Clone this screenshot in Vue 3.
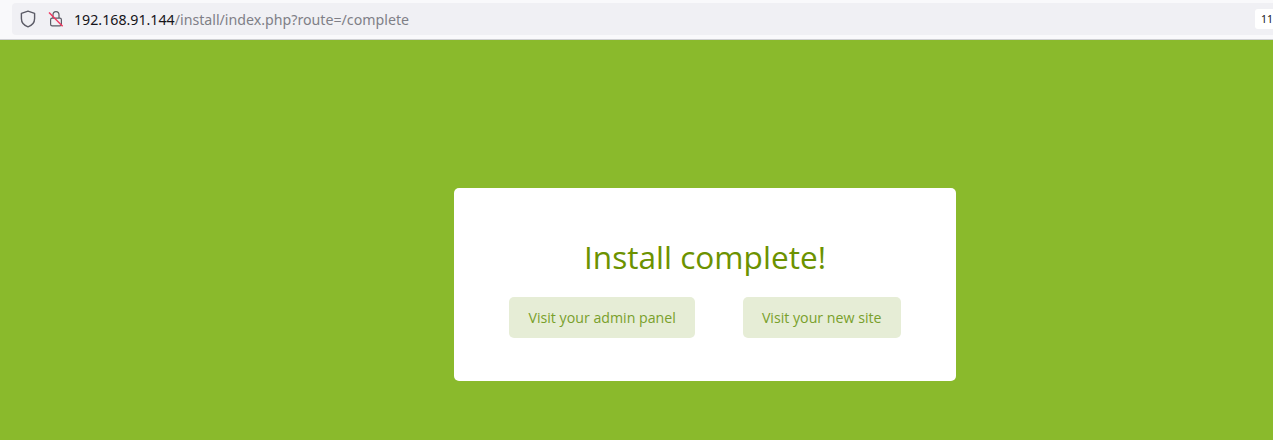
<script setup>
const buttons = ["Visit your admin panel", "Visit your new site"];
</script>

<template>
  <div class="page">
    <header class="browser-bar">
      <div class="url-field">
        <svg class="icon shield" width="16" height="18" viewBox="0 0 16 18" fill="none">
          <path
            d="M8 1.2 14.6 3.4V8.6C14.6 12.6 11.8 15.6 8 16.8 4.2 15.6 1.4 12.6 1.4 8.6V3.4Z"
            stroke="#5b5b66"
            stroke-width="1.4"
            stroke-linejoin="round"
          />
        </svg>
        <svg class="icon lock" width="16" height="18" viewBox="0 0 16 18" fill="none">
          <path
            d="M5 8V4.8C5 2.9 6.2 1.6 8 1.6S11 2.9 11 4.8V8"
            stroke="#5b5b66"
            stroke-width="1.2"
          />
          <rect x="2.6" y="8.2" width="10.8" height="7.6" rx="1.6" stroke="#5b5b66" stroke-width="1.2" />
          <path d="M1 2.4 14.6 16.2" stroke="#f0365f" stroke-width="1.4" />
        </svg>
        <span class="url"><span class="host">192.168.91.144</span>/install/index.php?route=/complete</span>
        <span class="chip">11</span>
      </div>
    </header>

    <main class="stage">
      <section class="card">
        <h1>Install complete!</h1>
        <div class="actions">
          <a v-for="label in buttons" :key="label" class="btn">{{ label }}</a>
        </div>
      </section>
    </main>
  </div>
</template>

<style>
html,
body {
  margin: 0;
  overflow: hidden;
}
</style>

<style scoped>
.page {
  width: 1273px;
  height: 440px;
  display: flex;
  flex-direction: column;
  overflow: hidden;
  font-family: "Open Sans", sans-serif;
}

.browser-bar {
  height: 40px;
  flex: none;
  box-sizing: border-box;
  padding: 3px 0 4px 12px;
  background: #f9f9fb;
  border-bottom: 1px solid #cfd0d3;
}

.url-field {
  height: 32px;
  display: flex;
  align-items: center;
  background: #f0f0f4;
  border-radius: 4px 0 0 4px;
  font-family: "Noto Sans", sans-serif;
}

.icon {
  flex: none;
}

.shield {
  margin-left: 8px;
}

.lock {
  margin-left: 12px;
}

.url {
  margin-left: 10px;
  font-size: 14.2px;
  color: #7f7f87;
  white-space: nowrap;
}

.host {
  color: #15141a;
}

.chip {
  margin-left: auto;
  width: 18px;
  height: 20px;
  box-sizing: border-box;
  padding-left: 6px;
  background: #fff;
  border-radius: 3px 0 0 3px;
  font-size: 10.5px;
  line-height: 20px;
  color: #15141a;
}

.stage {
  flex: 1;
  background: #8aba2c;
  padding: 148px 0 0 454px;
}

.card {
  width: 502px;
  height: 193px;
  box-sizing: border-box;
  padding-top: 49px;
  background: #fff;
  border-radius: 5px;
  display: flex;
  flex-direction: column;
  align-items: center;
}

h1 {
  margin: 0;
  font-size: 31.6px;
  font-weight: 400;
  line-height: 40px;
  color: #6c9200;
}

.actions {
  margin-top: 20px;
  display: flex;
  gap: 48px;
}

.btn {
  height: 41px;
  padding: 0 19px;
  display: flex;
  align-items: center;
  background: #e6edd6;
  border-radius: 5px;
  font-size: 14.2px;
  color: #79a02b;
  white-space: nowrap;
}
</style>
